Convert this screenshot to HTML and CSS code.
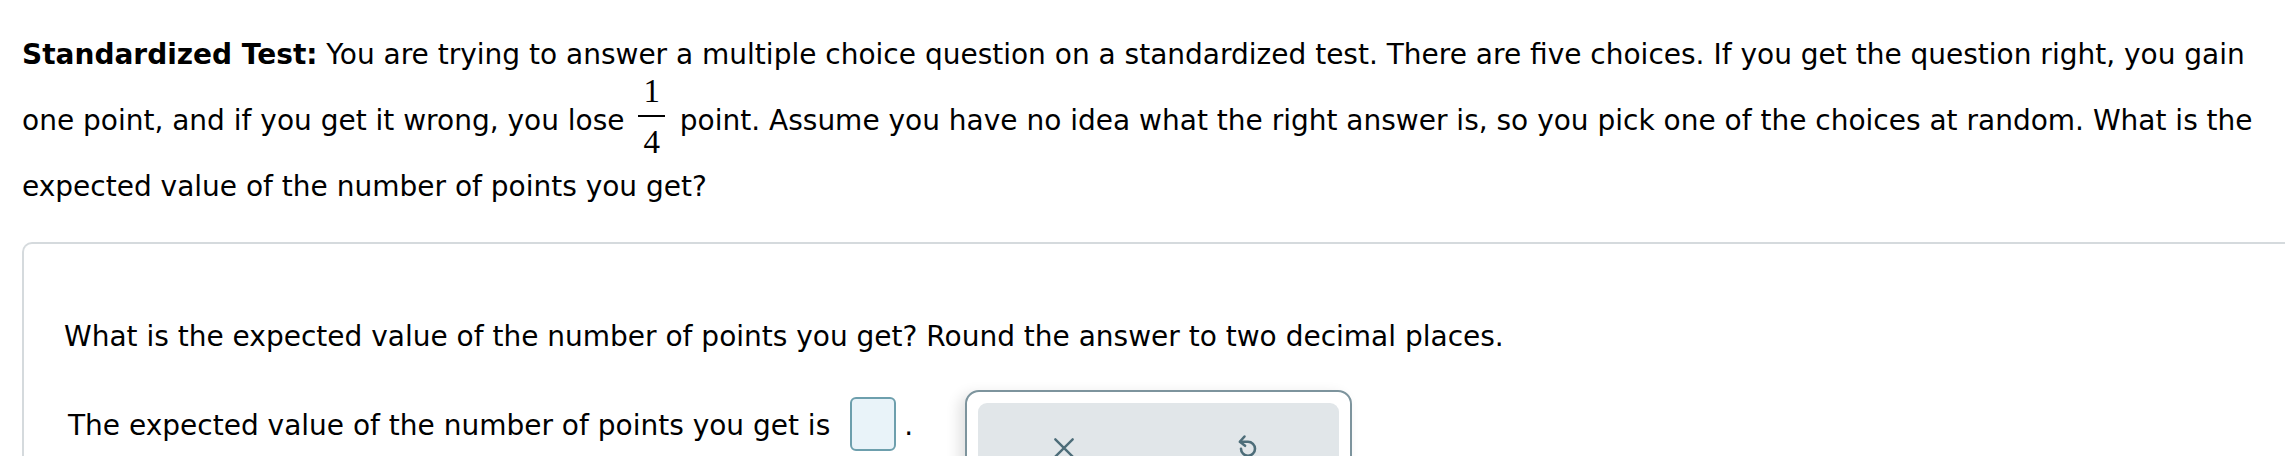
FILE: index.html
```html
<!DOCTYPE html>
<html>
<head>
<meta charset="utf-8">
<link rel="stylesheet" href="styles.css">
</head>
<body>
<div class="page">
  <p class="stem"><b>Standardized Test:</b> You are trying to answer a multiple choice question on a standardized test. There are five choices. If you get the question right, you gain one point, and if you get it wrong, you lose <span class="frac"><span class="num">1</span><span class="den">4</span></span> point. Assume you have no idea what the right answer is, so you pick one of the choices at random. What is the expected value of the number of points you get?</p>
  <div class="panel">
    <p class="question">What is the expected value of the number of points you get? Round the answer to two decimal places.</p>
    <div class="answer-row">
      <span class="answer-text">The expected value of the number of points you get is</span>
      <span class="input"></span>
      <span class="dot">.</span>
      <div class="keypad">
        <div class="keypad-inner">
          <svg class="icon icon-x" viewBox="0 0 24 24" width="26" height="26"><path d="M4 4 L20 20 M20 4 L4 20" stroke="#4d6d79" stroke-width="2.2" fill="none" stroke-linecap="round"/></svg>
          <svg class="icon icon-undo" viewBox="0 0 24 24" width="28" height="28"><path d="M9 3 L5 7.5 L9.5 11" stroke="#4d6d79" stroke-width="2.2" fill="none" stroke-linecap="round" stroke-linejoin="round"/><path d="M5.5 7.5 H12 A6 6 0 1 1 6 13.5" stroke="#4d6d79" stroke-width="2.2" fill="none" stroke-linecap="round"/></svg>
        </div>
      </div>
    </div>
  </div>
</div>
</body>
</html>
```
FILE: styles.css
```css
html, body {
  margin: 0;
  padding: 0;
  background: #ffffff;
}
.page {
  padding: 22px 0 0 22px;
  font-family: "DejaVu Sans", Verdana, sans-serif;
  font-size: 28px;
  color: #000;
  overflow: hidden;
  height: 434px;
}
.stem {
  margin: 0;
  line-height: 66px;
  padding-right: 16px;
}
.stem b {
  font-weight: bold;
}
.frac {
  display: inline-flex;
  flex-direction: column;
  align-items: center;
  vertical-align: 28px;
  font-family: "Liberation Serif", "DejaVu Serif", serif;
  font-size: 33px;
  margin: -14px 6px -6px 5px;
}
.frac .num {
  border-bottom: 2px solid #000;
  padding: 0 5px 7px 5px;
  line-height: 34px;
}
.frac .den {
  padding-top: 8px;
  line-height: 34px;
}
.panel {
  margin-top: 22px;
  border: 2px solid #d5dadd;
  border-right: none;
  border-radius: 10px 0 0 0;
  padding: 73px 0 0 40px;
  height: 300px;
}
.question {
  margin: 0;
  line-height: 40px;
}
.answer-row {
  display: flex;
  align-items: flex-start;
  margin-top: 33px;
  padding-left: 4px;
}
.answer-text {
  line-height: 40px;
  padding-top: 16px;
}
.input {
  width: 42px;
  height: 50px;
  margin-left: 20px;
  margin-top: 7px;
  border: 2px solid #6d9fad;
  border-radius: 6px;
  background: #e9f3f9;
}
.dot {
  line-height: 40px;
  padding-top: 16px;
  margin-left: 8px;
}
.keypad {
  margin-left: 52px;
  width: 387px;
  height: 120px;
  border: 2px solid #7d949d;
  border-radius: 14px;
  padding: 11px 11px 0 11px;
  box-sizing: border-box;
  box-shadow: -6px 4px 14px rgba(0,0,0,0.12);
  background: #fff;
}
.keypad-inner {
  background: #e1e6e9;
  border-radius: 9px;
  height: 100px;
  display: flex;
  align-items: flex-start;
  padding-top: 32px;
  box-sizing: border-box;
}
.icon-x {
  margin-left: 73px;
}
.icon-undo {
  margin-left: 157px;
  margin-top: -2px;
}
```
